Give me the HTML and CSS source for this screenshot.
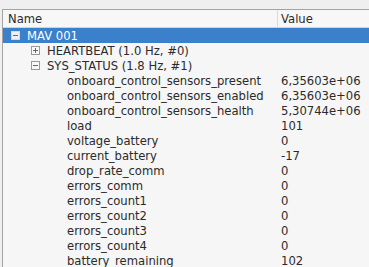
FILE: index.html
```html
<!DOCTYPE html>
<html lang="en">
<head>
    <meta charset="UTF-8">
    <title>MAVLink Inspector</title>
    <link rel="stylesheet" href="styles.css">
</head>
<body>
    <div class="tree">
        <div class="header">
            <div class="col-name">Name</div>
            <div class="col-value">Value</div>
        </div>

        <div class="row selected">
            <div class="col-name lvl0"><span class="toggle minus"></span>MAV 001</div>
            <div class="col-value"></div>
        </div>
        <div class="row">
            <div class="col-name lvl1"><span class="toggle plus"></span>HEARTBEAT (1.0 Hz, #0)</div>
            <div class="col-value"></div>
        </div>
        <div class="row">
            <div class="col-name lvl1"><span class="toggle minus"></span>SYS_STATUS (1.8 Hz, #1)</div>
            <div class="col-value"></div>
        </div>
        <div class="row"><div class="col-name lvl2">onboard_control_sensors_present</div><div class="col-value">6,35603e+06</div></div>
        <div class="row"><div class="col-name lvl2">onboard_control_sensors_enabled</div><div class="col-value">6,35603e+06</div></div>
        <div class="row"><div class="col-name lvl2">onboard_control_sensors_health</div><div class="col-value">5,30744e+06</div></div>
        <div class="row"><div class="col-name lvl2">load</div><div class="col-value">101</div></div>
        <div class="row"><div class="col-name lvl2">voltage_battery</div><div class="col-value">0</div></div>
        <div class="row"><div class="col-name lvl2">current_battery</div><div class="col-value">-17</div></div>
        <div class="row"><div class="col-name lvl2">drop_rate_comm</div><div class="col-value">0</div></div>
        <div class="row"><div class="col-name lvl2">errors_comm</div><div class="col-value">0</div></div>
        <div class="row"><div class="col-name lvl2">errors_count1</div><div class="col-value">0</div></div>
        <div class="row"><div class="col-name lvl2">errors_count2</div><div class="col-value">0</div></div>
        <div class="row"><div class="col-name lvl2">errors_count3</div><div class="col-value">0</div></div>
        <div class="row"><div class="col-name lvl2">errors_count4</div><div class="col-value">0</div></div>
        <div class="row"><div class="col-name lvl2">battery_remaining</div><div class="col-value">102</div></div>
    </div>
</body>
</html>
```

FILE: styles.css
```css
* {
    box-sizing: border-box;
}
html, body {
    height: 100%;
    overflow: hidden;
}
body {
    margin: 0;
    padding: 9px 0 0 2px;
    background-color: #efefef;
    font-family: "DejaVu Sans", sans-serif;
    font-size: 11.6px;
    color: #2a2a2a;
}
.tree {
    height: 100%;
    background-color: #f6f6f6;
    border-top: 1px solid #a3a3a3;
    border-left: 1px solid #a3a3a3;
}
.header {
    display: flex;
    height: 18px;
    background-color: #f7f7f7;
    border-bottom: 1px solid #d2d2d2;
}
.header .col-name {
    padding-left: 5px;
    border-right: 1px solid #dcdcdc;
}
.row {
    display: flex;
    height: 15px;
}
.row.selected {
    background-color: #3b80cb;
    color: white;
}
.col-name {
    width: 275px;
    flex-shrink: 0;
    white-space: nowrap;
    display: flex;
    align-items: center;
}
.col-value {
    padding-left: 3px;
    white-space: nowrap;
    display: flex;
    align-items: center;
}
.lvl0 { padding-left: 8px; }
.lvl1 { padding-left: 28px; }
.lvl2 { padding-left: 64px; }
.toggle {
    position: relative;
    width: 9px;
    height: 9px;
    border: 1px solid #9a9a9a;
    background-color: #f8f8f8;
    margin-right: 7px;
    flex-shrink: 0;
}
.selected .toggle {
    border-color: #d8d8d8;
    background-color: #f0f0f0;
}
.toggle::before {
    content: "";
    position: absolute;
    left: 1px;
    top: 3px;
    width: 5px;
    height: 1px;
    background-color: #6a6a6a;
}
.toggle.plus::after {
    content: "";
    position: absolute;
    left: 3px;
    top: 1px;
    width: 1px;
    height: 5px;
    background-color: #6a6a6a;
}
```
